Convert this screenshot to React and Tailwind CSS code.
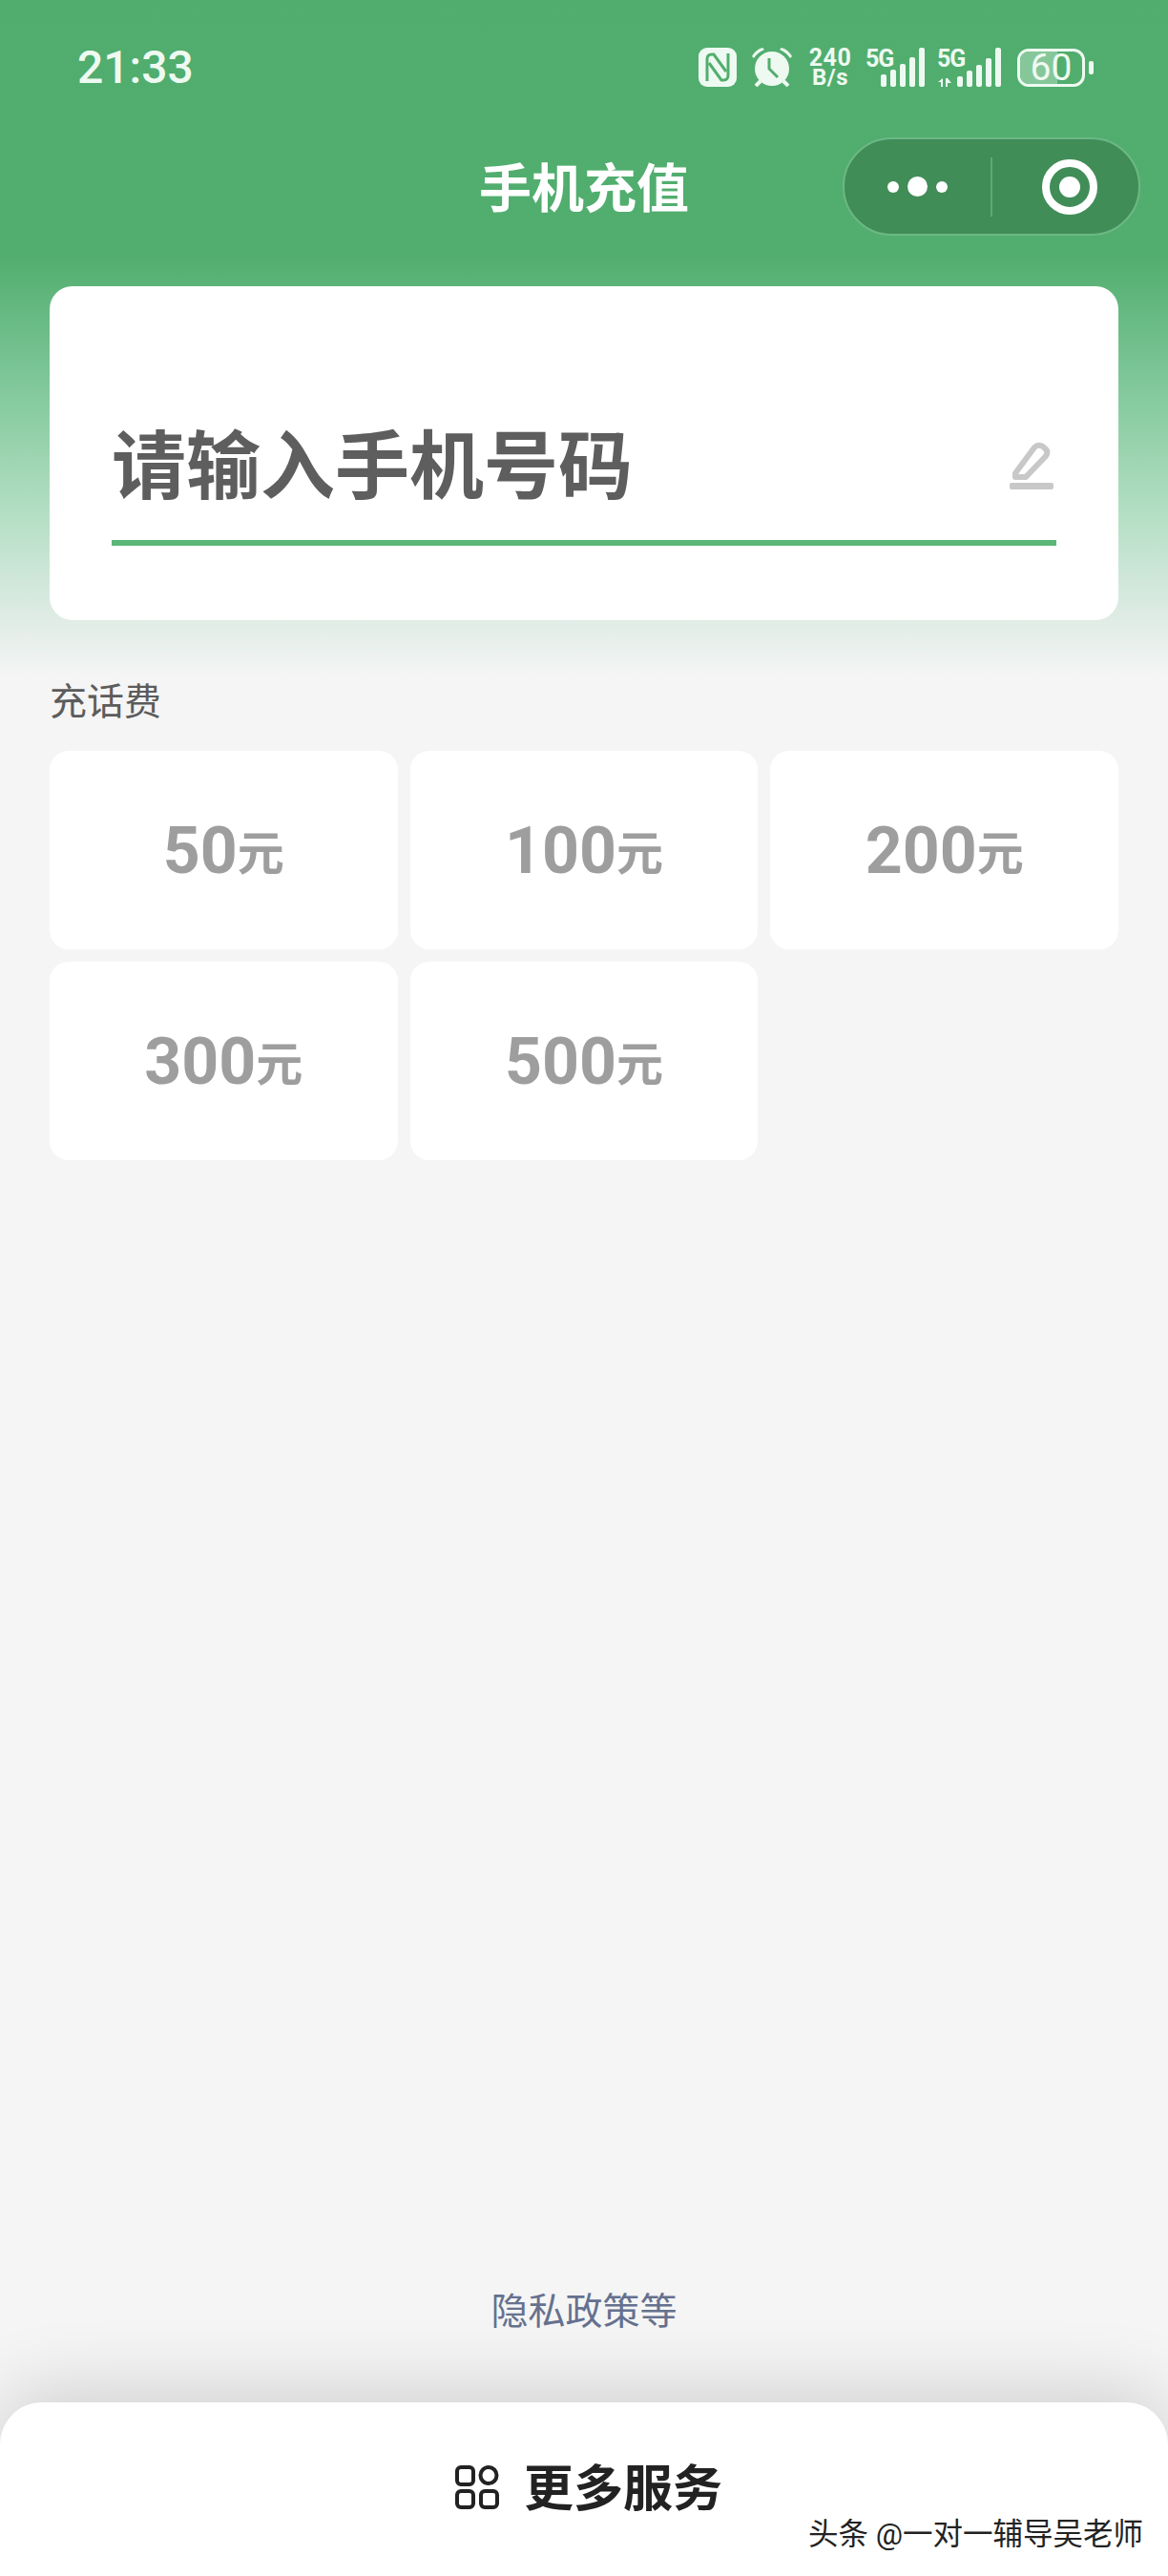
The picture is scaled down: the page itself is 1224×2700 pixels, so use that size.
import React from 'react';

const amounts = [
  { value: '50', id: 'a' },
  { value: '100', id: 'b' },
  { value: '200', id: 'c' },
  { value: '300', id: 'd' },
  { value: '500', id: 'e' },
];

const NfcIcon = () => (
  <svg width="40" height="41" viewBox="0 0 40 41">
    <rect x="0" y="0" width="40" height="41" rx="9" fill="#eefaf1" />
    <path d="M9 35 V12 Q9 7 14 7 H16 L29 25" fill="none" stroke="#52ae6d" strokeWidth="3" />
    <path d="M31 6 V29 Q31 34 26 34 H24 L11 16" fill="none" stroke="#52ae6d" strokeWidth="3" />
  </svg>
);

const AlarmIcon = () => (
  <svg width="42" height="41" viewBox="0 0 42 41">
    <circle cx="21" cy="22" r="18" fill="#eefaf1" />
    <path d="M0 9 Q4 2 11 0 L13 2 Q6 5 2 11 Z M42 9 Q38 2 31 0 L29 2 Q36 5 40 11 Z" fill="#eefaf1" />
    <path d="M9 35 L4 40 M33 35 L38 40" stroke="#eefaf1" strokeWidth="4" />
    <path d="M18 11 V22 L27 31" fill="none" stroke="#52ae6d" strokeWidth="3" />
  </svg>
);

const Bars = ({ tops }) => (
  <div className="flex items-end gap-[4px] h-[41px]">
    {tops.map((h, i) => (
      <div key={i} className="w-[6px] rounded-[2px] bg-[#eefaf1]" style={{ height: h }} />
    ))}
  </div>
);

const Signal = ({ tops, arrows }) => (
  <div className={`relative flex items-end justify-end h-[41px] ${arrows ? 'w-[67px]' : 'w-[62px]'}`}>
    <span className="absolute left-0 top-[-1px] font-bold text-[25px] leading-[26px] tracking-[-1px] text-[#eefaf1]">5G</span>
    {arrows && (
      <svg className="absolute left-0 bottom-0" width="16" height="9" viewBox="0 0 16 9">
        <path d="M6 0 V9 H4 V4 H1 Z M9 9 V0 H11 L15 5 H11 V9 Z" fill="#eefaf1" />
      </svg>
    )}
    <Bars tops={tops} />
  </div>
);

const Battery = () => (
  <div className="flex items-center gap-[4px]">
    <div className="relative flex h-[40px] w-[71px] items-center justify-center rounded-[12px] border-[3px] border-[#eefaf1]">
      <div className="absolute inset-y-0 left-0 w-[60%] rounded-l-[9px] bg-[#86c79a]" />
      <span className="relative text-[39px] leading-[34px] text-[#eefaf1]">60</span>
    </div>
    <div className="h-[14px] w-[5px] rounded-[2px] bg-[#eefaf1]" />
  </div>
);

const StatusBar = () => (
  <div className="flex items-center justify-between pl-[81px] pr-[78px] pt-[50px]">
    <span className="text-[48px] leading-[41px] font-medium text-[#eefaf1]">21:33</span>
    <div className="flex items-center h-[41px]">
      <NfcIcon />
      <div className="ml-[16px]"><AlarmIcon /></div>
      <div className="ml-[17px] flex w-[46px] flex-col items-center font-bold text-[#eefaf1]">
        <span className="text-[25px] leading-[21px] tracking-[0.5px]">240</span>
        <span className="text-[24px] leading-[20px] tracking-[0.5px]">B/s</span>
      </div>
      <div className="ml-[14px]"><Signal tops={[13, 18, 24, 31, 41]} /></div>
      <div className="ml-[13px]"><Signal tops={[11, 17, 23, 30, 41]} arrows /></div>
      <div className="ml-[17px]"><Battery /></div>
    </div>
  </div>
);

const Capsule = () => (
  <div className="flex h-[103px] w-[312px] items-center rounded-full border-2 border-[#6cb885] bg-[#418d58]">
    <div className="flex w-[153px] items-center justify-center gap-[9px]">
      <span className="h-[12px] w-[12px] rounded-full bg-white" />
      <span className="h-[21px] w-[21px] rounded-full bg-white" />
      <span className="h-[12px] w-[12px] rounded-full bg-white" />
    </div>
    <div className="h-[62px] w-[2px] bg-[#5fa878]" />
    <div className="flex flex-1 items-center justify-center pl-[8px]">
      <div className="flex h-[58px] w-[58px] items-center justify-center rounded-full border-[8px] border-white">
        <span className="h-[22px] w-[22px] rounded-full bg-white" />
      </div>
    </div>
  </div>
);

const PencilIcon = () => (
  <svg width="46" height="50" viewBox="0 0 46 50">
    <path d="M6 33 L26 6 Q30 2 35 5 L37 7 Q41 10 38 15 L17 37 H6 Z" fill="none" stroke="#c8c8c8" strokeWidth="6" strokeLinejoin="round" />
    <rect x="0" y="43" width="46" height="7" rx="2" fill="#c8c8c8" />
  </svg>
);

const AmountCard = ({ value }) => (
  <div className="flex h-[208px] items-center justify-center rounded-[20px] bg-white text-[#9e9e9e]">
    <div className="flex items-baseline pt-[2px] font-bold">
      <span className="text-[68px] leading-none">{value}</span>
      <span className="-translate-y-[3px] text-[49px] leading-none">元</span>
    </div>
  </div>
);

const GridIcon = () => (
  <svg width="46" height="46" viewBox="0 0 46 46" fill="none" stroke="#222222" strokeWidth="4">
    <rect x="2" y="2" width="17" height="18" rx="4" />
    <circle cx="35" cy="10.5" r="8.5" />
    <rect x="2" y="27" width="17" height="17" rx="4" />
    <rect x="27" y="27" width="17" height="17" rx="4" />
  </svg>
);

export default function App() {
  return (
    <div className="flex h-[2700px] w-[1224px] flex-col overflow-hidden bg-[linear-gradient(to_bottom,#50ad6e_0px,#52ae6f_270px,#7fc799_400px,#b4dfc4_540px,#e0ece6_650px,#f5f5f5_710px)] font-['Roboto','Noto_Sans_CJK_SC',sans-serif]">
      <StatusBar />

      <div className="mt-[53px] grid grid-cols-[341px_1fr_312px] items-center pr-[29px]">
        <div />
        <h1 className="h-[103px] text-center text-[55px] leading-[109px] font-bold text-white">手机充值</h1>
        <Capsule />
      </div>

      <div className="mx-[52px] mt-[53px] h-[350px] rounded-[24px] bg-white px-[65px] pt-[146px]">
        <div className="flex h-[126px] items-start justify-between border-b-[6px] border-[#5bb677]">
          <span className="text-[78px] leading-[90px] font-bold text-[#5e5e5e]">请输入手机号码</span>
          <div className="mt-[17px] mr-[3px]"><PencilIcon /></div>
        </div>
      </div>

      <div className="mx-[52px] mt-[60px] text-[39px] leading-[52px] text-[#5c5c5c]">充话费</div>

      <div className="mx-[52px] mt-[25px] grid grid-cols-3 gap-[13px]">
        {amounts.map((a) => (
          <AmountCard key={a.id} value={a.value} />
        ))}
      </div>

      <div className="mt-auto pb-[69px] text-center text-[39px] leading-[52px] text-[#66718f]">隐私政策等</div>

      <div className="relative flex h-[182px] items-start justify-center gap-[26px] rounded-t-[44px] bg-white pt-[66px] pl-[10px] shadow-[0_-10px_80px_rgba(0,0,0,0.16)]">
        <GridIcon />
        <span className="text-[52px] leading-[52px] font-bold text-[#222222]">更多服务</span>
        <span className="absolute right-[26px] bottom-[25px] text-[31.5px] leading-[36px] text-[#222222] [text-shadow:1px_1px_0_#ffffff]">头条 @一对一辅导吴老师</span>
      </div>
    </div>
  );
}
